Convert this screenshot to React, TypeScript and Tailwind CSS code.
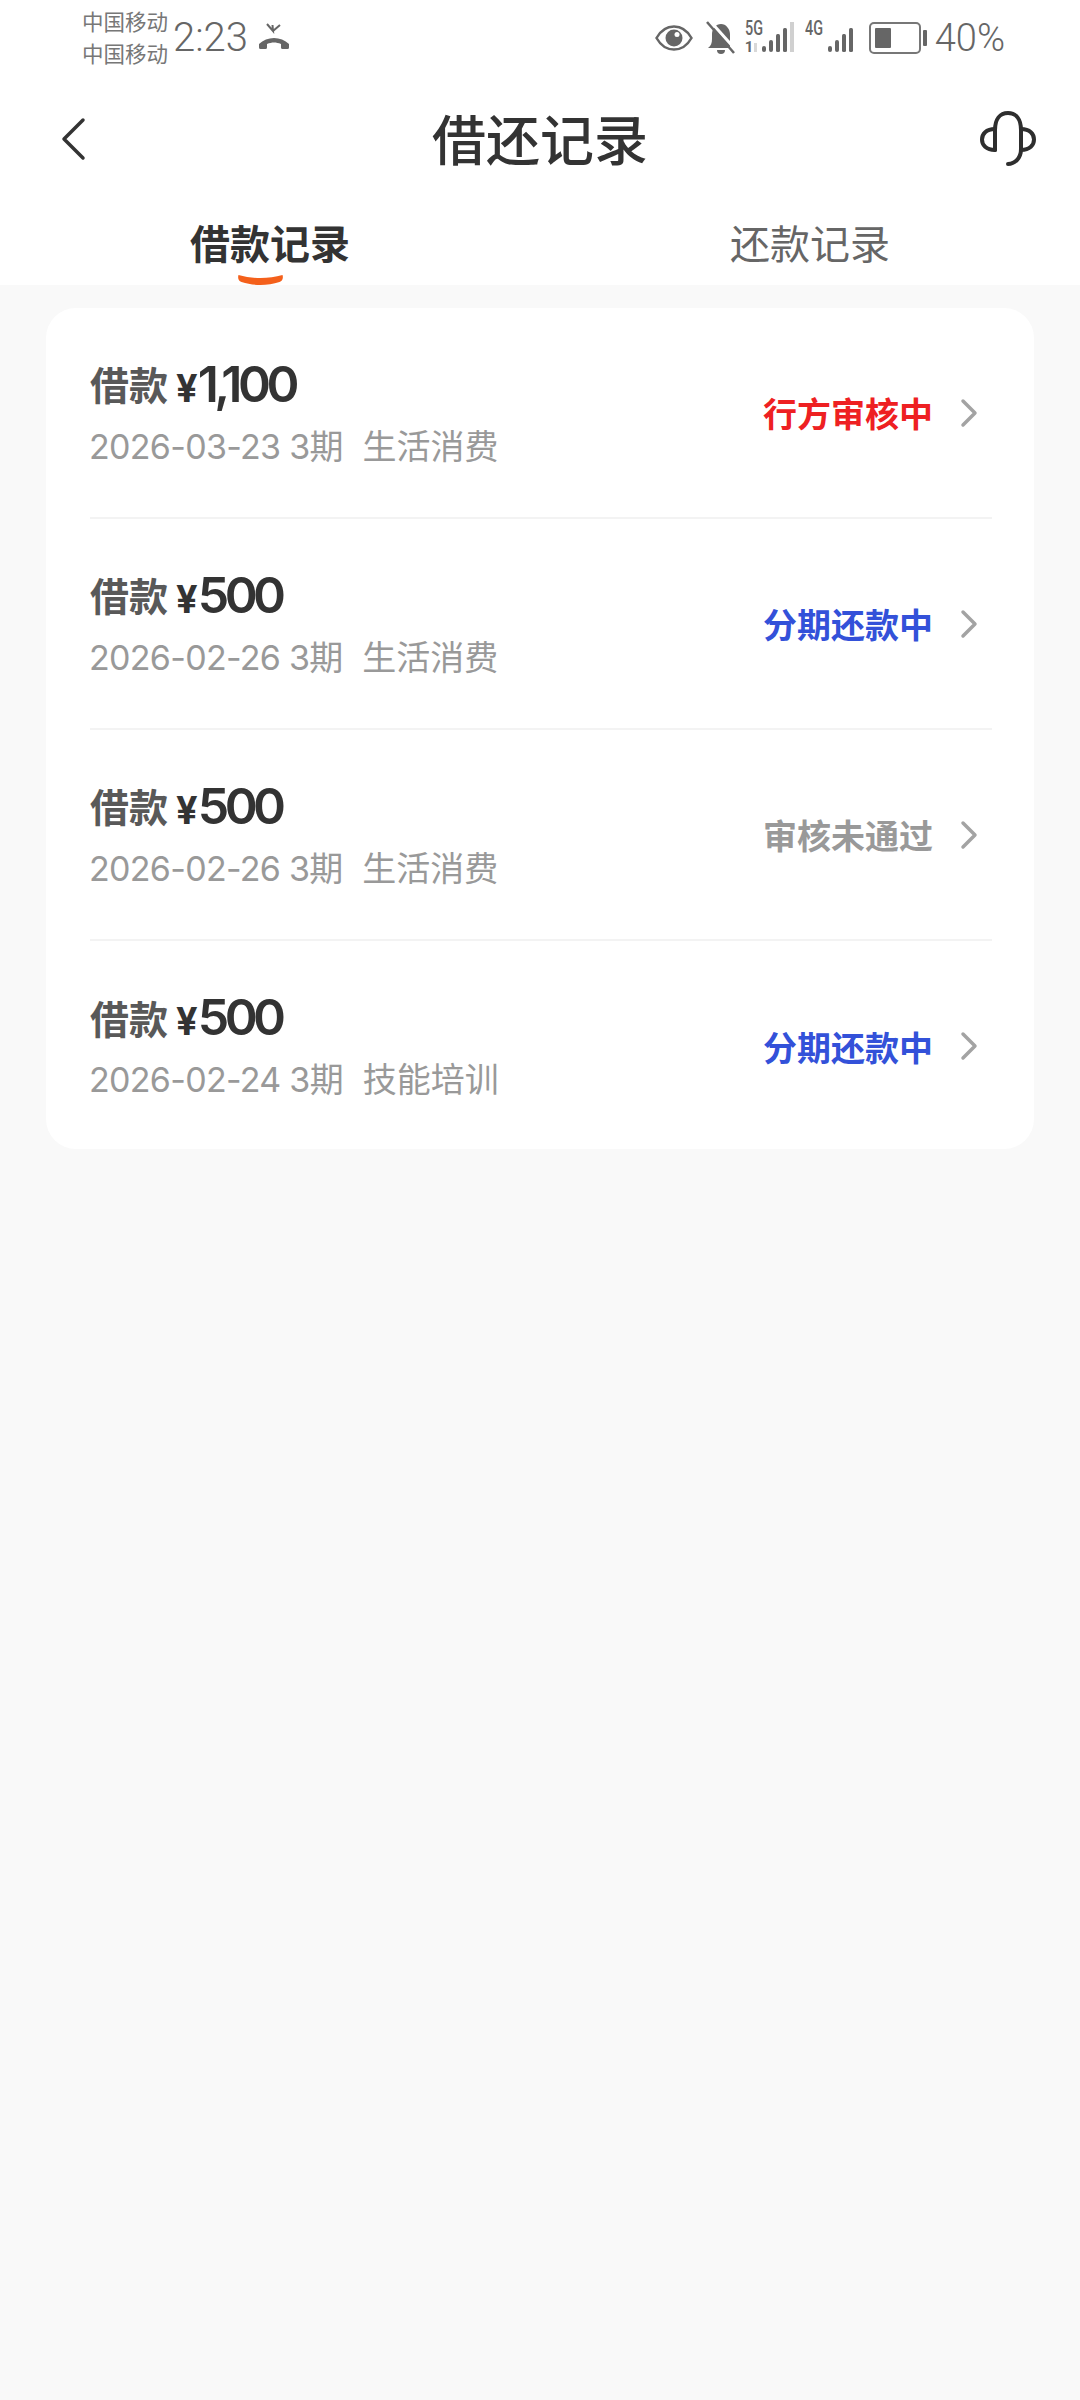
const FONT = "font-['Roboto','Noto_Sans_CJK_SC',sans-serif]";
const NUM_FONT = "font-['Inter','Noto_Sans_CJK_SC',sans-serif]";

const records = [
  { amount: '1,100', date: '2026-03-23', purpose: '生活消费', status: '行方审核中', color: 'text-[#ee2022]' },
  { amount: '500', date: '2026-02-26', purpose: '生活消费', status: '分期还款中', color: 'text-[#3351d9]' },
  { amount: '500', date: '2026-02-26', purpose: '生活消费', status: '审核未通过', color: 'text-[#999999]' },
  { amount: '500', date: '2026-02-24', purpose: '技能培训', status: '分期还款中', color: 'text-[#3351d9]' },
];

const Bars = ({ lastDim }: { lastDim?: boolean }) => (
  <svg width="32" height="32" viewBox="0 0 32 32" fill="#666">
    <rect x="0" y="24" width="4" height="6" rx="2" />
    <rect x="7" y="18" width="4" height="12" rx="2" />
    <rect x="14" y="12" width="4" height="18" rx="1.5" />
    <rect x="21" y="6" width="4" height="24" rx="1.5" />
    {lastDim ? <rect x="28" y="0" width="4" height="30" fill="#d0d0d0" /> : null}
  </svg>
);

const StatusBar = () => (
  <div className="flex h-[76px] items-center justify-between pr-[75px] pl-[82px] text-[#666666]">
    <div className="flex items-center">
      <div className="flex flex-col pt-[1px] text-[21.5px] leading-[32px] text-[#777777]">
        <span>中国移动</span>
        <span>中国移动</span>
      </div>
      <span className="ml-[5px] text-[40px] leading-none font-light">2:23</span>
      <svg width="34" height="30" viewBox="0 0 34 30" className="ml-[9px]" fill="none">
        <path d="M10 1 L16 8 L15.5 2 M16 8 L23 2" stroke="#666" strokeWidth="2" />
        <path d="M2 21c8-8 22-8 30 0v3.500a1.500 1.500 0 0 1-1.500 1.500h-5a1.500 1.500 0 0 1-1.500-1.500V21c-5-2-9-2-14 0v3.500A1.500 1.500 0 0 1 8.500 26h-5A1.500 1.500 0 0 1 2 24.500z" fill="#666" />
      </svg>
    </div>
    <div className="flex items-center">
      <svg width="38" height="28" viewBox="0 0 38 28" fill="none">
        <path d="M1.500 14C6 6 12 2.500 19 2.500S32 6 36.500 14C32 22 26 25.500 19 25.500S6 22 1.500 14z" stroke="#666" strokeWidth="2.500" />
        <circle cx="19" cy="14" r="8.500" fill="#666" />
        <circle cx="22" cy="10.500" r="2.500" fill="#fff" />
      </svg>
      <svg width="30" height="34" viewBox="0 0 30 34" className="ml-[13px]" fill="none">
        <path d="M2 27c3-2 4-5 4-9v-5c0-5 4-10 9-10s9 5 9 10v14z" fill="#666" />
        <path d="M11 29h8a4 4 0 0 1-8 0z" fill="#666" />
        <path d="M4 0l26 29" stroke="#fff" strokeWidth="3" />
        <path d="M1 1l27 31" stroke="#666" strokeWidth="2.500" />
      </svg>
      <div className="relative ml-[9px] flex h-[32px] w-[49px] items-end justify-end">
        <span className="absolute top-[-5px] left-0 origin-left scale-x-[0.72] text-[20px] leading-[22px] font-medium text-[#666666]">5G</span>
        <span className="absolute bottom-[-1px] left-0 text-[15px] leading-[16px] font-bold text-[#666666]">1</span>
        <span className="absolute bottom-[2px] left-[9px] h-[9px] w-[3px] bg-[#d8d8d8]" />
        <Bars lastDim />
      </div>
      <div className="relative ml-[11px] flex h-[32px] w-[55px] items-end justify-end">
        <span className="absolute top-[-5px] left-0 origin-left scale-x-[0.72] text-[20px] leading-[22px] font-medium text-[#666666]">4G</span>
        <Bars />
      </div>
      <div className="ml-[9px] flex items-center">
        <div className="flex h-[32px] w-[52px] items-center rounded-[5px] border-[2.5px] border-[#777777] p-[4px]">
          <div className="h-full w-[16px] rounded-[1px] bg-[#666666]" />
        </div>
        <div className="ml-[2px] h-[16px] w-[4px] rounded-[1px] bg-[#666666]" />
      </div>
      <span className="ml-[8px] text-[38px] leading-none font-light">40%</span>
    </div>
  </div>
);

const Header = () => (
  <div className="relative flex h-[128px] items-center justify-center">
    <button type="button" className="absolute top-[41px] left-[60px]">
      <svg width="26" height="44" viewBox="0 0 26 44" fill="none">
        <path d="M23 3L4 22l19 19" stroke="#333" strokeWidth="3.500" strokeLinecap="round" strokeLinejoin="round" />
      </svg>
    </button>
    <h1 className="pt-[6px] text-[54px] leading-none font-medium text-[#333333]">借还记录</h1>
    <button type="button" className="absolute top-[34px] right-[44px]">
      <svg width="56" height="58" viewBox="0 0 56 58" fill="none" stroke="#2e2e2e" strokeWidth="4" strokeLinecap="round">
        <path d="M15 40V20C15 9 20 3 28 3s13 6 13 17v19c0 9-6 15-13 15" />
        <path d="M15 19C6 19 2 24 2 29.500S6 40 15 40" />
        <path d="M41 19c9 0 13 5 13 10.500S50 40 41 40" />
      </svg>
    </button>
  </div>
);

const Tabs = () => (
  <div className="flex h-[81px] bg-white">
    <div className="relative flex w-[540px] justify-center pt-[17px]">
      <span className="text-[40px] leading-[50px] font-bold text-[#333333]">借款记录</span>
      <svg width="47" height="13" viewBox="0 0 46 13" className="absolute bottom-0 left-[237px]">
        <path d="M1 3c14 4 30 4 44 0 1 3 0 6-3 7-12 4-26 4-38 0-3-1-4-4-3-7z" fill="#f4601b" />
      </svg>
    </div>
    <div className="flex w-[540px] justify-center pt-[17px]">
      <span className="text-[40px] leading-[50px] text-[#666666]">还款记录</span>
    </div>
  </div>
);

const RecordRow = ({ item, last }: { item: (typeof records)[number]; last: boolean }) => (
  <div className={`mr-[42px] ml-[44px] flex items-center justify-between ${last ? 'h-[208px] pt-[2px]' : 'h-[211px] border-b-2 border-[#f3f3f3]'}`}>
    <div className="flex flex-col">
      <div className="flex h-[62px] items-center">
        <span className="text-[39px] leading-none font-bold text-[#595959]">借款</span>
        <span className={`${NUM_FONT} ml-[8px] text-[38px] leading-none font-bold text-[#333333]`}>¥</span>
        <span className={`${NUM_FONT} mb-[8px] text-[50px] leading-none font-semibold tracking-[-4.5px] text-[#333333]`}>{item.amount}</span>
      </div>
      <div className={`${NUM_FONT} mt-[6px] -ml-[1px] text-[34px] leading-[44px] text-[#999999]`}>
        <span className="tracking-[-0.7px]">{item.date} 3</span>期
        <span className="ml-[19px]">{item.purpose}</span>
      </div>
    </div>
    <div className="flex items-center">
      <span className={`mt-[5px] text-[34px] leading-none font-bold ${item.color}`}>{item.status}</span>
      <svg width="18" height="30" viewBox="0 0 18 30" fill="none" className="mr-[14px] ml-[27px]">
        <path d="M3 3l12 12L3 27" stroke="#a3a3a3" strokeWidth="3.500" strokeLinecap="round" strokeLinejoin="round" />
      </svg>
    </div>
  </div>
);

export default function App() {
  return (
    <div className={`${FONT} flex h-[2400px] w-[1080px] flex-col bg-[#f9f9f9]`}>
      <div className="bg-white">
        <StatusBar />
        <Header />
        <Tabs />
      </div>
      <div className="mx-[46px] mt-[23px] rounded-[30px] bg-white">
        {records.map((item, i) => (
          <RecordRow key={i} item={item} last={i === records.length - 1} />
        ))}
      </div>
    </div>
  );
}
